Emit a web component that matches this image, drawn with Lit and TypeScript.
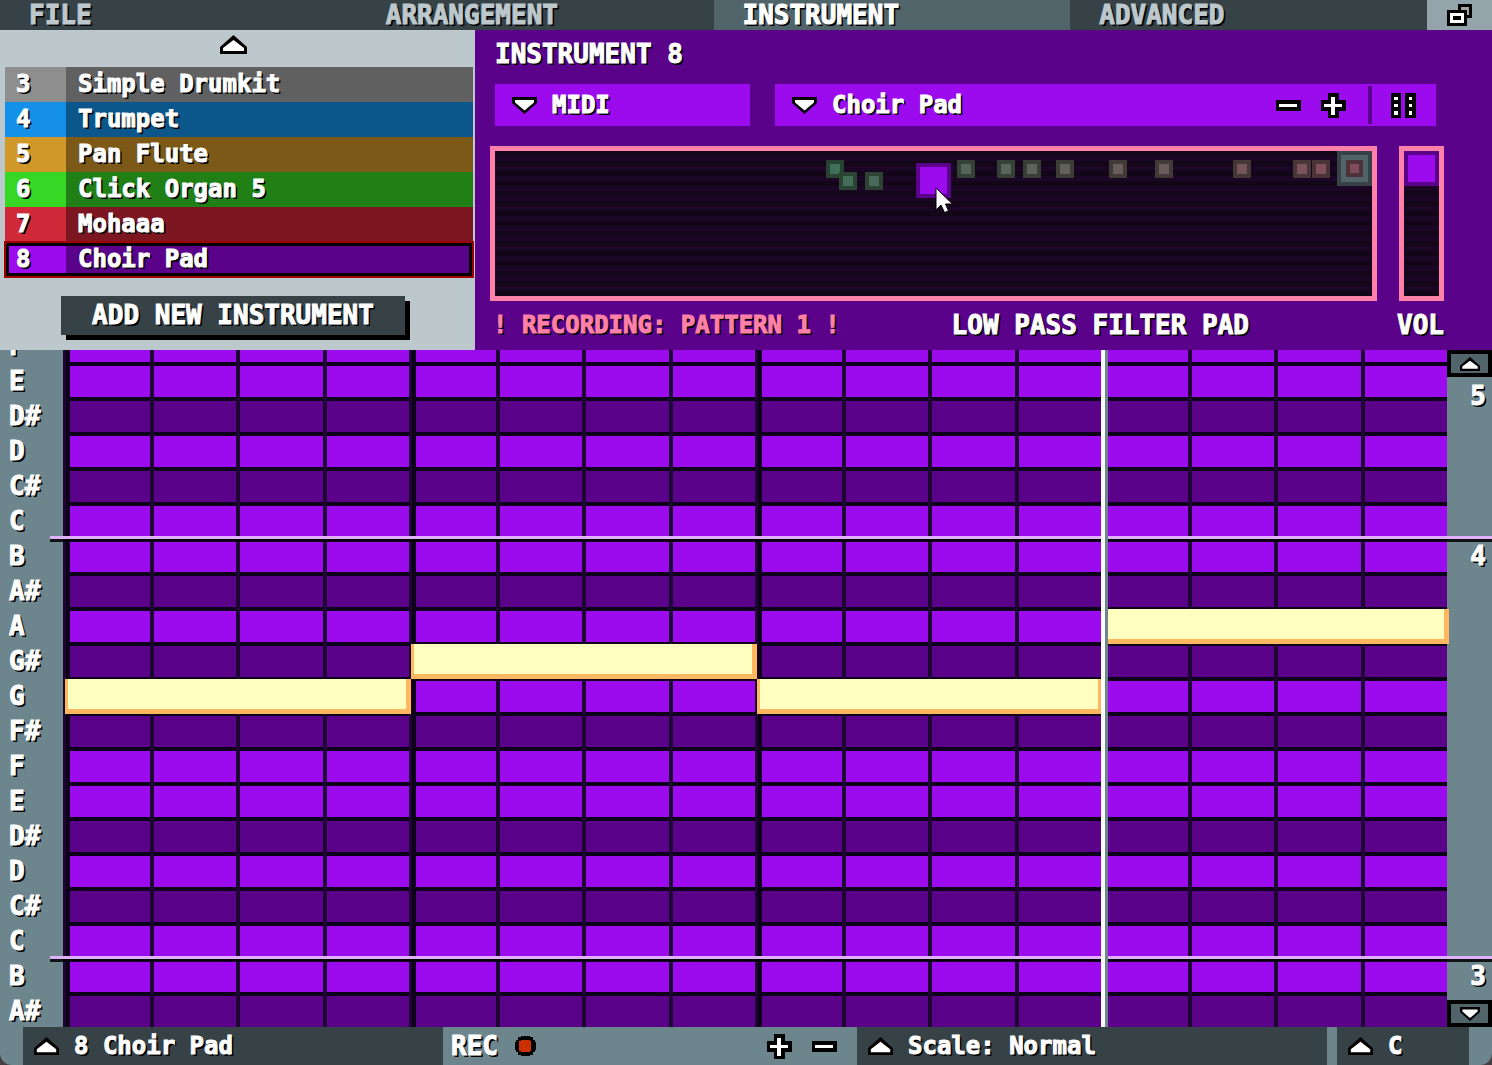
import { LitElement, html, svg, css } from "lit";
import { customElement, state } from "lit/decorators.js";
import { classMap } from "lit/directives/class-map.js";

interface Instrument { id: number; name: string; light: string; dark: string; }
interface Note { row: number; column: number; length: number; }
interface TrailPoint { x: number; y: number; edge: string; fill: string; }

const TABS = ["FILE", "ARRANGEMENT", "INSTRUMENT", "ADVANCED"];

const INSTRUMENTS: Instrument[] = [
  { id: 3, name: "Simple Drumkit", light: "#8e8e8e", dark: "#606060" },
  { id: 4, name: "Trumpet", light: "#1590e8", dark: "#0b568a" },
  { id: 5, name: "Pan Flute", light: "#d09828", dark: "#7c5917" },
  { id: 6, name: "Click Organ 5", light: "#36d825", dark: "#207f15" },
  { id: 7, name: "Mohaaa", light: "#d02a3a", dark: "#7c1722" },
  { id: 8, name: "Choir Pad", light: "#9c0aee", dark: "#5a038a" },
];

const KEYS = ["F", "E", "D#", "D", "C#", "C", "B", "A#", "A", "G#", "G", "F#", "F", "E", "D#", "D", "C#", "C", "B", "A#"];
const OCTAVES: Record<number, string> = { 6: "4", 18: "3" };

const NOTES: Note[] = [
  { row: 11, column: 1, length: 4 },
  { row: 10, column: 5, length: 4 },
  { row: 11, column: 9, length: 4 },
  { row: 9, column: 13, length: 4 },
];

// Positions are percentages of the filter pad's width and height.
const TRAIL: TrailPoint[] = [
  { x: 37.7, y: 6.3, edge: "#284332", fill: "#3f7059" },
  { x: 39.2, y: 14.6, edge: "#2b4333", fill: "#446e5a" },
  { x: 42.2, y: 14.6, edge: "#2e4234", fill: "#49695a" },
  { x: 52.7, y: 6.3, edge: "#354036", fill: "#54665a" },
  { x: 57.2, y: 6.3, edge: "#364036", fill: "#58655a" },
  { x: 60.2, y: 6.3, edge: "#393e36", fill: "#5d625a" },
  { x: 64, y: 6.3, edge: "#3c3d36", fill: "#62605a" },
  { x: 70, y: 6.3, edge: "#403b37", fill: "#695d5a" },
  { x: 75.2, y: 6.3, edge: "#413a37", fill: "#6c5b5b" },
  { x: 84.2, y: 6.3, edge: "#463737", fill: "#74565b" },
  { x: 91, y: 6.3, edge: "#4a3537", fill: "#7b535c" },
  { x: 93.2, y: 6.3, edge: "#4b3438", fill: "#7e515c" },
];

const arrowUp = svg`<path d="M13.5 0 27 12V19H0V12Z" fill="#000"/><path d="M13.5 5 24 13V16H3V13Z" fill="#fff"/>`;
const arrowDown = svg`<path d="M0 0H25V6L12.5 17 0 6Z" fill="#000"/><path d="M3 3H22V5.5L12.5 13.5 3 5.5Z" fill="#fff"/>`;

const iconUp = html`<svg class="icon" width="27" height="19" viewBox="0 0 27 19" aria-hidden="true">${arrowUp}</svg>`;
const iconUpBar = html`<svg class="icon select-icon" width="25" height="18" viewBox="0 0 27 19" preserveAspectRatio="none" aria-hidden="true">${arrowUp}</svg>`;
const iconDown = html`<svg class="icon select-icon" width="25" height="17" viewBox="0 0 25 17" aria-hidden="true">${arrowDown}</svg>`;
const iconUpSmall = html`<svg class="icon" width="20" height="14" viewBox="0 0 27 19" preserveAspectRatio="none" aria-hidden="true">${arrowUp}</svg>`;
const iconDownSmall = html`<svg class="icon" width="20" height="14" viewBox="0 0 25 17" preserveAspectRatio="none" aria-hidden="true">${arrowDown}</svg>`;
const iconMinus = html`<svg class="icon" width="25" height="25" viewBox="0 0 25 25" aria-hidden="true"><path d="M0 7H25V18H0Z" fill="#000"/><path d="M3 11H21V14H3Z" fill="#fff"/></svg>`;
const iconPlus = html`<svg class="icon" width="25" height="25" viewBox="0 0 25 25" aria-hidden="true"><path d="M7 0H18V7H25V18H18V25H7V18H0V7H7Z" fill="#000"/><path d="M10 4H14V11H21V14H14V22H10V14H3V11H10Z" fill="#fff"/></svg>`;
const iconGrip = html`<svg class="icon" width="25" height="25" viewBox="0 0 25 25" aria-hidden="true"><path d="M0 0H10V25H0ZM14 0H25V25H14Z" fill="#000"/><path d="M3 4H7V7H3ZM3 11H7V14H3ZM3 18H7V22H3ZM18 4H21V7H18ZM18 11H21V14H18ZM18 18H21V22H18Z" fill="#fff"/></svg>`;
const iconWindows = html`<svg class="icon" width="25" height="22" viewBox="0 0 25 22" aria-hidden="true"><path d="M11 0H25V14H20V22H0V6H11Z" fill="#000"/><path d="M14 3H22V11H20V6H14Z" fill="#a3a3a3"/><path fill-rule="evenodd" d="M3 9H17V19H3ZM6 12V16H14V12Z" fill="#fff"/></svg>`;
const iconRecord = html`<svg class="icon" width="21" height="20" viewBox="0 0 21 20" aria-hidden="true"><path d="M6 0H15V1H18V4H20V6H21V14H20V16H18V19H15V20H6V19H3V16H1V14H0V6H1V4H3V1H6Z" fill="#000"/><path d="M6 4H15V5H16V15H15V16H6V15H4V5H6Z" fill="#cc3000"/></svg>`;
const iconPointer = html`<svg class="pointer" width="18" height="27" viewBox="0 0 18 27" aria-hidden="true"><path d="M1 1V23L6 18 9.500 25.500 13.500 24 10.500 17H17.500Z" fill="#fff" stroke="#000" stroke-width="1"/></svg>`;

@customElement("app-root")
export class AppRoot extends LitElement {
  @state() private tab = "INSTRUMENT";
  @state() private selected = 8;

  static styles = css`
    :host {
      --violet: #9c0aee;
      --plum: #5a038a;
      --slate: #364245;
      --steel: #6d858c;
      --teal: #50646a;
      --pink: #ff80a8;
      display: flex;
      flex-direction: column;
      height: 100vh;
      overflow: hidden;
      background: var(--steel);
      color: #fff;
      font: bold 26px/30px "DejaVu Sans Mono", monospace;
      text-shadow: 1px 1px 0 #000, 2px 2px 0 #000;
      -webkit-text-stroke: 1px currentColor;
      white-space: nowrap;
    }
    * { box-sizing: border-box; }
    button, select {
      margin: 0; padding: 0; border: 0; border-radius: 0; background: none;
      color: inherit; font: inherit; text-shadow: inherit; cursor: pointer;
    }
    h1, p { margin: 0; font: inherit; }
    .icon { display: block; flex: none; }

    .tabs { display: grid; grid-template-columns: repeat(4, 1fr) 65px; background: var(--slate); }
    .tab { height: 30px; padding-left: 29px; text-align: left; color: #bdc8cd; }
    .tab.active { background: var(--teal); color: #fff; }
    .windows { display: flex; align-items: center; justify-content: center; background: #93a4aa; }

    .upper { display: flex; height: 320px; flex: none; }
    .library {
      width: 475px; flex: none; display: flex; flex-direction: column;
      padding: 0 2px 0 5px; background: #bdc8cd;
    }
    .scroll, .add { align-self: center; margin-right: 12px; }
    .scroll { height: 37px; width: 40px; display: flex; align-items: center; justify-content: center; padding-bottom: 8px; }
    .instrument {
      position: relative; display: grid; grid-template-columns: 61px 1fr;
      width: 100%; height: 35px; line-height: 35px; text-align: left; font-size: 24px;
    }
    .number { padding-left: 11px; }
    .name { padding-left: 12px; }
    .instrument.selected::after {
      content: ""; position: absolute; inset: 1px;
      border: 3px solid #000; outline: 2px solid #a00000;
    }
    .add {
      margin-top: 19px; width: 344px; height: 39px; line-height: 39px;
      background: var(--slate); box-shadow: 5px 5px 0 #000;
    }

    .editor { flex: 1; min-width: 0; display: flex; flex-direction: column; padding: 9px 48px 10px 15px; background: var(--plum); }
    .title { padding-left: 5px; margin-bottom: 15px; }
    .selectors { display: flex; gap: 25px; padding: 0 8px 0 5px; margin-bottom: 20px; }
    .dropdown { display: grid; align-items: center; font-size: 24px; }
    .dropdown > * { grid-area: 1 / 1; }
    .dropdown select { appearance: none; width: 100%; height: 100%; padding-left: 57px; }
    .dropdown option { background: var(--plum); }
    .select-icon { margin-left: 17px; pointer-events: none; z-index: 1; }
    .selectors .dropdown { height: 42px; background: var(--violet); }
    .kind { width: 255px; }
    .preset { flex: 1; display: flex; align-items: center; background: var(--violet); }
    .preset .dropdown { flex: 1; }
    .preset-actions { display: flex; gap: 20px; padding-right: 22px; }
    .preset-grip { height: 38px; padding: 0 20px 0 19px; border-left: 4px solid var(--plum); }

    .pads { display: flex; justify-content: space-between; gap: 22px; height: 155px; margin-bottom: 9px; }
    .pad, .volume {
      border: 5px solid var(--pink);
      background: repeating-linear-gradient(#140619 0 5px, #1c0626 5px 10px);
    }
    .pad { position: relative; flex: 1; }
    .trail { position: absolute; width: 18px; height: 18px; border: 4px solid; }
    .origin {
      position: absolute; top: 0; right: 0; width: 35px; height: 35px;
      display: grid; place-items: center; background: var(--teal); border: 4px solid var(--slate);
    }
    .origin-dot { width: 17px; height: 17px; background: #7f4c5b; border: 4px solid #4d3338; }
    .handle {
      position: absolute; left: 48%; top: 8%; width: 35px; height: 35px;
      background: var(--violet); border: 4px solid var(--plum);
    }
    .pointer { position: absolute; left: 15px; top: 20px; overflow: visible; }
    .volume { width: 45px; display: flex; }
    .volume input {
      appearance: none; writing-mode: vertical-lr; direction: rtl;
      width: 35px; height: 100%; margin: 0; background: none;
    }
    .volume input::-webkit-slider-thumb {
      appearance: none; width: 35px; height: 35px;
      background: var(--violet); border: 4px solid var(--plum);
    }
    .captions { display: grid; grid-template-columns: 1fr auto auto; padding-left: 3px; }
    .recording { color: var(--pink); font-size: 24px; }
    .caption-pad { padding-right: 148px; }

    .roll { position: relative; flex: 1; min-height: 0; overflow: hidden; display: flex; flex-direction: column; justify-content: flex-end; }
    .row { position: relative; flex: none; display: grid; grid-template-columns: 63px 1fr 45px; height: 35px; line-height: 39px; }
    .key { padding-left: 9px; }
    .octave { padding-right: 6px; text-align: right; }
    .cells { display: grid; grid-template-columns: repeat(16, 1fr); }
    .cell { background: var(--violet); box-shadow: inset 4px 0 0 #1e0433, inset 0 4px 0 #0e001b; }
    .sharp .cell { background: var(--plum); }
    .cell.beat { box-shadow: inset 3px 0 0 #1e0433, inset 7px 0 0 #0e001b, inset 0 4px 0 #0e001b; }
    .row.boundary::before {
      content: ""; position: absolute; left: 50px; right: 0; top: -1px; height: 6px;
      background: linear-gradient(#e0b0ff 0 3px, rgba(0, 0, 0, 0.85) 3px);
    }
    .overlay {
      position: absolute; left: 63px; right: 45px; bottom: 0;
      display: grid; grid-template-columns: repeat(16, 1fr);
      grid-template-rows: repeat(20, 35px);
    }
    .note {
      margin: 2px -2px -2px 2px;
      background: #ffffc0; border: solid #ffb860; border-width: 0 5px 5px 3px;
    }
    .playhead { grid-column: 13; grid-row: 1 / 21; width: 7px; background: #fff; border-right: 3px solid var(--steel); }
    .octave-nav { position: absolute; right: 0; top: 0; bottom: 0; width: 45px; display: flex; flex-direction: column; }
    .step { height: 27px; display: flex; align-items: center; justify-content: center; background: var(--teal); border: 4px solid #000; }
    .step.down { margin-top: auto; }
    .octave-nav .octave { line-height: 39px; }

    .footer {
      position: relative; display: grid; grid-template-columns: 420fr 414fr 470fr 10px 132fr;
      height: 38px; flex: none; padding: 0 23px; overflow: hidden; background: #453f44;
    }
    .footer::before { content: ""; position: absolute; inset: 0; background: var(--steel); border-radius: 0 0 12px 12px; }
    .footer > * { position: relative; }
    .footer .dropdown { background: var(--slate); }
    .footer .select-icon { margin-left: 11px; }
    .footer .dropdown select { padding-left: 51px; }
    .transport { display: flex; align-items: center; justify-content: space-between; padding: 0 20px 0 8px; }
    .record { display: flex; align-items: center; gap: 17px; }
    .zoom { display: flex; gap: 20px; }
    .root { grid-column: 5; }
  `;

  render() {
    const current = INSTRUMENTS.find((i) => i.id === this.selected)!;
    return html`
      <nav class="tabs" aria-label="Sections">
        ${TABS.map((t) => html`<button class=${classMap({ tab: true, active: t === this.tab })} @click=${() => (this.tab = t)}>${t}</button>`)}
        <button class="windows" aria-label="Switch view">${iconWindows}</button>
      </nav>

      <main class="upper">
        <section class="library" aria-label="Instruments">
          <button class="scroll" aria-label="Scroll up">${iconUp}</button>
          <div class="instruments">
            ${INSTRUMENTS.map((i) => html`
              <button class=${classMap({ instrument: true, selected: i.id === this.selected })} @click=${() => (this.selected = i.id)}>
                <span class="number" style="background:${i.light}">${i.id}</span>
                <span class="name" style="background:${i.dark}">${i.name}</span>
              </button>`)}
          </div>
          <button class="add">ADD NEW INSTRUMENT</button>
        </section>

        <section class="editor">
          <h1 class="title">INSTRUMENT ${this.selected}</h1>
          <div class="selectors">
            <label class="dropdown kind">
              ${iconDown}
              <select aria-label="Instrument type"><option>MIDI</option></select>
            </label>
            <div class="preset">
              <label class="dropdown">
                ${iconDown}
                <select aria-label="Preset"><option>${current.name}</option></select>
              </label>
              <div class="preset-actions">
                <button aria-label="Previous preset">${iconMinus}</button>
                <button aria-label="Next preset">${iconPlus}</button>
              </div>
              <button class="preset-grip" aria-label="Preset options">${iconGrip}</button>
            </div>
          </div>
          <div class="pads">
            <div class="pad">
              ${TRAIL.map((p) => html`<span class="trail" style="left:${p.x}%;top:${p.y}%;background:${p.fill};border-color:${p.edge}"></span>`)}
              <span class="origin"><span class="origin-dot"></span></span>
              <button class="handle" aria-label="Filter position">${iconPointer}</button>
            </div>
            <div class="volume"><input id="vol" type="range" min="0" max="100" value="100" /></div>
          </div>
          <div class="captions">
            <p class="recording">! RECORDING: PATTERN 1 !</p>
            <p class="caption-pad">LOW PASS FILTER PAD</p>
            <label for="vol">VOL</label>
          </div>
        </section>
      </main>

      <section class="roll" aria-label="Piano roll">
        ${KEYS.map((k, r) => html`
          <div class=${classMap({ row: true, sharp: k.endsWith("#"), boundary: k === "B" })}>
            <span class="key">${k}</span>
            <div class="cells">
              ${Array.from({ length: 16 }, (_, c) => html`<span class=${classMap({ cell: true, beat: c % 4 === 0 })}></span>`)}
            </div>
            <span class="octave">${OCTAVES[r] ?? ""}</span>
          </div>`)}
        <div class="overlay">
          ${NOTES.map((n) => html`<span class="note" style="grid-area:${n.row} / ${n.column} / span 1 / span ${n.length}"></span>`)}
          <span class="playhead"></span>
        </div>
        <div class="octave-nav">
          <button class="step" aria-label="Octave up">${iconUpSmall}</button>
          <span class="octave">5</span>
          <button class="step down" aria-label="Octave down">${iconDownSmall}</button>
        </div>
      </section>

      <footer class="footer">
        <label class="dropdown track">
          ${iconUpBar}
          <select aria-label="Track"><option>${current.id} ${current.name}</option></select>
        </label>
        <div class="transport">
          <button class="record">REC ${iconRecord}</button>
          <div class="zoom">
            <button aria-label="Zoom in">${iconPlus}</button>
            <button aria-label="Zoom out">${iconMinus}</button>
          </div>
        </div>
        <label class="dropdown scale">
          ${iconUpBar}
          <select aria-label="Scale"><option>Scale: Normal</option></select>
        </label>
        <label class="dropdown root">
          ${iconUpBar}
          <select aria-label="Root note"><option>C</option></select>
        </label>
      </footer>
    `;
  }
}
